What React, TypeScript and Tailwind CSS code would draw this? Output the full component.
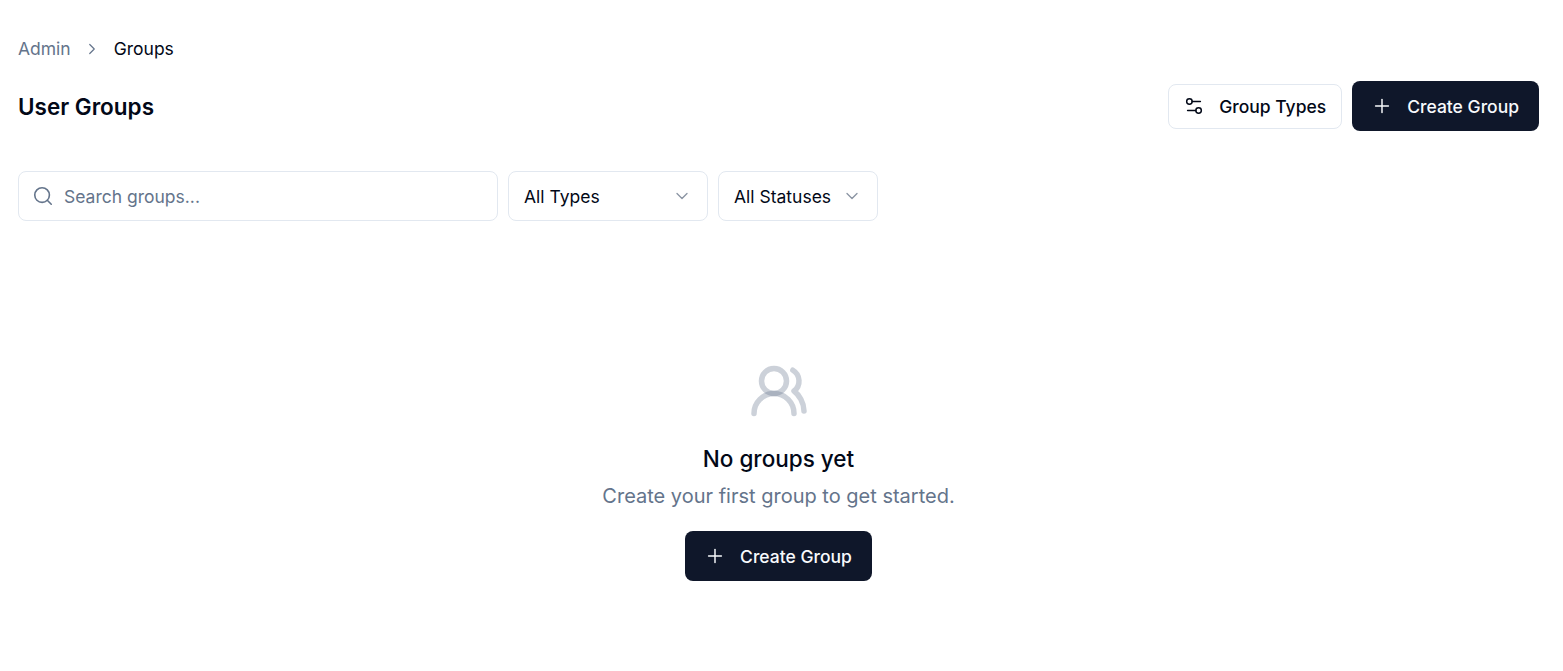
import { ChevronDown, ChevronRight, Plus, Search, Settings2, UsersRound } from "lucide-react";

function CreateButton({ className = "" }: { className?: string }) {
  return (
    <button className={`flex h-[50px] items-center gap-[14px] rounded-lg bg-[#0f172a] pl-[19px] pr-[20px] text-[17.5px] font-medium leading-[26px] text-[#f8fafc] ${className}`}>
      <Plus size={22} strokeWidth={1.6} />
      <span className="relative top-[1px]">Create Group</span>
    </button>
  );
}

function Select({ label, width }: { label: string; width: string }) {
  return (
    <button className={`flex h-[50px] items-center justify-between rounded-lg border border-[#e2e8f0] bg-white pl-[15px] pr-[15px] text-[17.5px] leading-[26px] text-[#020817] ${width}`}>
      <span className="relative top-[1px]">{label}</span>
      <ChevronDown size={20} strokeWidth={1.6} className="text-[#8b95a3]" />
    </button>
  );
}

export default function App() {
  return (
    <div className="min-h-[671px] bg-white pl-[18px] pr-[24px] pt-[38px] font-['Inter',sans-serif] text-[#020817]">
      <nav className="flex h-[22px] items-center text-[17.5px]">
        <span className="text-[#64748b]">Admin</span>
        <ChevronRight size={18} strokeWidth={1.6} className="ml-[12px] mr-[13px] text-[#64748b]" />
        <span>Groups</span>
      </nav>

      <div className="mt-[21px] flex items-center justify-between">
        <h1 className="relative top-[1px] text-[22.5px] font-semibold leading-[50px]">User Groups</h1>
        <div className="flex items-center gap-[10px]">
          <button className="flex h-[45px] items-center gap-[14px] rounded-lg border border-[#e2e8f0] bg-white pl-[14px] pr-[15px] text-[17.5px] font-medium leading-[26px]">
            <Settings2 size={22} strokeWidth={1.6} />
            <span className="relative top-[1px]">Group Types</span>
          </button>
          <CreateButton />
        </div>
      </div>

      <div className="mt-[40px] flex gap-[10px]">
        <div className="flex h-[50px] w-[480px] items-center gap-[10px] rounded-lg border border-[#e2e8f0] bg-white pl-[13px] text-[17.5px] leading-[26px] text-[#64748b]">
          <Search size={22} strokeWidth={1.75} />
          <span className="relative top-[1px]">Search groups...</span>
        </div>
        <Select label="All Types" width="w-[200px]" />
        <Select label="All Statuses" width="w-[160px]" />
      </div>

      <div className="mt-[140px] flex flex-col items-center">
        <UsersRound size={60} strokeWidth={2.2} stroke="#64748b" strokeOpacity={0.33} />
        <h2 className="mt-[22px] text-[22.5px] font-medium leading-[32px]">No groups yet</h2>
        <p className="mt-[6px] text-[20px] leading-[30px] text-[#64748b]">Create your first group to get started.</p>
        <CreateButton className="mt-[20px]" />
      </div>
    </div>
  );
}
